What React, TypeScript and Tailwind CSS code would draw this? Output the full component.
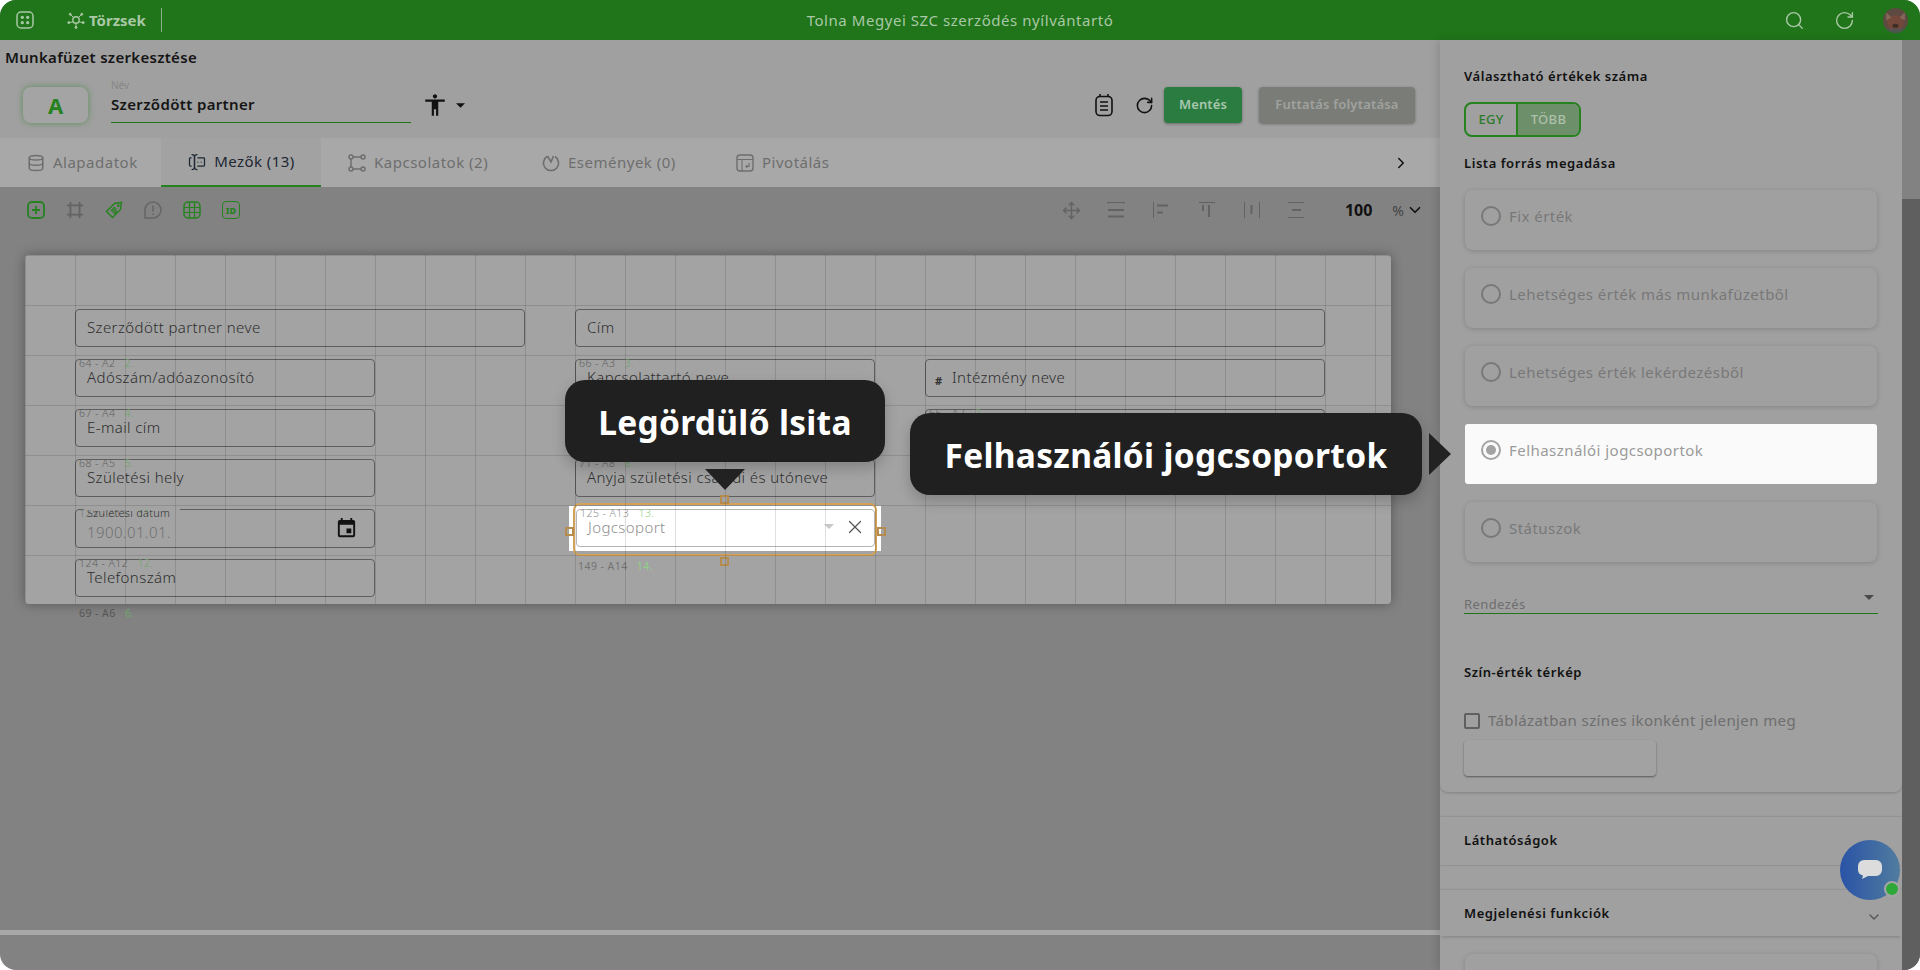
import { ChevronDown, ChevronRight, Database, Move, RotateCw, Search, X } from "lucide-react";
import { MdAccessibility, MdEvent } from "react-icons/md";
import { TbForms, TbFrame } from "react-icons/tb";

const font = "font-['Noto_Sans','Open_Sans',sans-serif]";

const Caret = ({ className }: { className: string }) => (
  <svg viewBox="0 0 10 5" className={className} fill="currentColor">
    <path d="M0 0h10L5 5z" />
  </svg>
);

const Order = ({ children, className = "text-[#6ea569]" }: { children: React.ReactNode; className?: string }) => (
  <span className={`ml-[6px] ${className}`}>{children}</span>
);

const Field = ({
  className,
  label,
  order,
  text,
}: {
  className: string;
  label?: string;
  order?: string;
  text: string;
}) => (
  <div className={`absolute flex h-[38px] items-center rounded-[4px] border border-[#5e5e5e] pb-[2px] pl-[11px] text-[15px] font-light tracking-[0.4px] text-[#2e2e2e] ${className}`}>
    {label && (
      <span className="absolute left-[3px] top-[-4px] whitespace-nowrap text-[10.5px] leading-[14px] tracking-[0.45px] text-[#5f5f5f]">
        {label} <Order>{order}</Order>
      </span>
    )}
    {text}
  </div>
);

const Tab = ({
  icon,
  label,
  className,
}: {
  icon: React.ReactNode;
  label: string;
  className: string;
}) => (
  <div className={`flex items-center gap-[8px] text-[15px] tracking-[0.5px] text-[#6e6e6e] ${className}`}>
    {icon}
    {label}
  </div>
);

const RadioCard = ({ label, active }: { label: string; active?: boolean }) => (
  <div
    className={`ml-px flex h-[60px] w-[412px] gap-[8px] pl-[16px] pt-[16px] text-[15px] tracking-[0.45px] ${
      active ? "rounded-[3px] bg-[#fafafa] text-[#9a9a9a]" : "rounded-[8px] bg-[#a0a0a0] text-[#787878] shadow-[0_1px_5px_rgba(0,0,0,0.18)]"
    }`}
  >
    <span
      className={`flex size-[20px] shrink-0 items-center justify-center rounded-full border-[2px] ${
        active ? "border-[#a3a3a3]" : "border-[#787878]"
      }`}
    >
      {active && <span className="size-[10px] rounded-full bg-[#a3a3a3]" />}
    </span>
    <span className="leading-[20px]">{label}</span>
  </div>
);

const SectionTitle = ({ children, className = "" }: { children: React.ReactNode; className?: string }) => (
  <div className={`text-[13px] font-semibold leading-[16px] tracking-[0.55px] text-[#111] ${className}`}>{children}</div>
);

export default function App() {
  return (
    <div className={`relative flex h-[970px] w-[1920px] flex-col overflow-hidden rounded-2xl bg-[#828282] ${font}`}>
      <header className="flex h-10 shrink-0 items-center bg-[#20741a] text-[#a9c8a5]">
        <div className="flex flex-1 items-center">
          <svg viewBox="0 0 18 18" className="ml-[16px] size-[18px]" fill="none" stroke="currentColor" strokeWidth="1.5">
            <rect x="1" y="1" width="16" height="16" rx="4" />
            <g fill="currentColor" stroke="none">
              <circle cx="6.3" cy="6.3" r="1.6" />
              <circle cx="11.7" cy="6.3" r="1.6" />
              <circle cx="6.3" cy="11.7" r="1.6" />
              <circle cx="11.7" cy="11.7" r="1.6" />
            </g>
          </svg>
          <svg viewBox="0 0 18 18" className="ml-[33px] size-[18px]" fill="currentColor" stroke="currentColor" strokeWidth="1">
            <circle cx="9" cy="9" r="3.2" fill="none" strokeWidth="1.4" />
            <path d="M6.8 6.8 3.5 3.5M11.2 6.8l3.3-3.3M9 12.3V16M6.3 10.8 2 11.6M11.7 10.8l4.3.8" strokeWidth="1" />
            <circle cx="3.2" cy="3.2" r="1" />
            <circle cx="14.8" cy="3.2" r="1" />
            <circle cx="9" cy="16.4" r="1" />
            <circle cx="1.8" cy="11.6" r="1" />
            <circle cx="16.2" cy="11.6" r="1" />
          </svg>
          <span className="ml-[4px] text-[15px] font-bold">Törzsek</span>
          <span className="ml-[15px] h-[24px] w-px bg-[#8cb088]" />
        </div>
        <div className="text-[15px] tracking-[0.55px]">Tolna Megyei SZC szerződés nyílvántartó</div>
        <div className="flex flex-1 items-center justify-end">
          <Search size={21} strokeWidth={1.6} />
          <RotateCw size={21} strokeWidth={1.6} className="ml-[29px]" />
          <svg viewBox="0 0 24 24" className="ml-[28px] mr-[12px] size-[25px] rounded-full">
            <rect width="24" height="24" fill="#5d4a40" />
            <ellipse cx="12" cy="14" rx="8" ry="7" fill="#74483a" />
            <path d="M3 4l5 5-5 3zM21 4l-5 5 5 3z" fill="#85675a" />
            <ellipse cx="12" cy="17" rx="3" ry="2" fill="#3f2d28" />
            <path d="M0 20h24v4H0z" fill="#4f5650" />
          </svg>
        </div>
      </header>

      <div className="flex min-h-0 flex-1">
        <main className="flex w-[1440px] flex-col">
          <div className="h-[98px] bg-[#a0a0a0]">
            <div className="pl-[5px] pt-[8px] text-[15px] font-semibold leading-[19px] tracking-[0.3px] text-[#151515]">
              Munkafüzet szerkesztése
            </div>
            <div className="mt-[20px] flex h-[36px] items-center">
              <div className="ml-[23px] flex h-[36px] w-[65px] items-center justify-center rounded-[8px] bg-[#a4a4a4] text-[22px] font-bold text-[#25821f] shadow-[0_0_6px_rgba(45,130,40,0.6)]">
                A
              </div>
              <div className="relative ml-[23px] h-[36px] w-[300px] border-b border-[#20741a]">
                <span className="absolute -top-[9px] left-0 text-[10px] leading-[14px] text-[#858585]">Név</span>
                <span className="absolute left-0 top-[7px] text-[15px] font-semibold leading-[20px] tracking-[0.35px] text-[#151515]">
                  Szerződött partner
                </span>
              </div>
              <MdAccessibility size={26} className="ml-[11px] text-[#111]" />
              <Caret className="ml-[8px] h-[5px] w-[9px] text-[#111]" />
              <div className="ml-auto flex items-center">
                <svg viewBox="0 0 18 24" className="mr-[22px] h-[24px] w-[18px]" fill="none" stroke="#111" strokeWidth="1.6">
                  <rect x="1" y="3.5" width="16" height="19" rx="4" />
                  <path d="M5 1v3M13 1v3M5 9h8M5 13h8M5 17h8" />
                </svg>
                <RotateCw size={19} strokeWidth={2} className="mr-[10px] text-[#111]" />
                <button className="h-[36px] w-[78px] rounded-[4px] bg-[#2a7c41] text-[13px] font-semibold tracking-[0.1px] text-[#a8c7ae] shadow-[0_1px_3px_rgba(0,0,0,0.35)]">
                  Mentés
                </button>
                <button className="ml-[17px] mr-[25px] h-[36px] w-[156px] rounded-[4px] bg-[#7a7c78] text-[13px] font-semibold tracking-[0.2px] text-[#a1a29f] shadow-[0_1px_3px_rgba(0,0,0,0.35)]">
                  Futtatás folytatása
                </button>
              </div>
            </div>
          </div>

          <nav className="relative flex h-[49px] items-center bg-[#a8a8a8]">
            <Tab className="ml-[27px] w-[134px]" label="Alapadatok" icon={<Database size={18} strokeWidth={2} />} />
            <div className="flex h-full w-[160px] items-center justify-center gap-[7px] border-b-[2px] border-[#25821f] bg-[#a2a2a2] text-[15px] tracking-[0.42px] text-[#1d2733]">
              <TbForms size={20} strokeWidth={1.5} />
              Mezők (13)
            </div>
            <Tab
              className="ml-[27px] w-[194px]"
              label="Kapcsolatok (2)"
              icon={
                <svg viewBox="0 0 18 18" className="size-[18px]" fill="none" stroke="currentColor" strokeWidth="1.5">
                  <circle cx="3" cy="3" r="2" />
                  <circle cx="15" cy="3" r="2" />
                  <circle cx="3" cy="15" r="2" />
                  <circle cx="15" cy="15" r="2" />
                  <path d="M5 3h8M3 5v8M5 15h8" />
                </svg>
              }
            />
            <Tab
              className="w-[194px]"
              label="Események (0)"
              icon={
                <svg viewBox="0 0 18 18" className="size-[18px]" fill="none" stroke="currentColor" strokeWidth="1.6">
                  <path d="M5 2.500A7.600 7.600 0 1 0 13 2.500" />
                  <path d="M5.500 2 9 8l2.500-6" />
                </svg>
              }
            />
            <Tab
              className=""
              label="Pivotálás"
              icon={
                <svg viewBox="0 0 18 18" className="size-[18px]" fill="none" stroke="currentColor" strokeWidth="1.4">
                  <rect x="1" y="1" width="16" height="16" rx="3" />
                  <path d="M1 5.500h16M6 5.500V17M13 9v3.500h-3M11.200 11 10 12.500l1.200 1.300" strokeWidth="1.1" />
                </svg>
              }
            />
            <ChevronRight size={18} strokeWidth={2} className="absolute left-[1392px] text-[#111]" />
          </nav>

          <div className="flex h-[68px] items-center pb-[22px] text-[#25821f]">
            <div className="ml-[27px] flex items-center gap-[21px]">
              <svg viewBox="0 0 18 18" className="size-[18px]" fill="none" stroke="currentColor" strokeWidth="1.8">
                <rect x="1" y="1" width="16" height="16" rx="4" />
                <path d="M9 5v8M5 9h8" />
              </svg>
              <TbFrame size={22} strokeWidth={2} className="-mx-[2px] text-[#636363]" />
              <svg viewBox="0 0 18 18" className="size-[18px]" fill="none" stroke="currentColor" strokeWidth="1.5">
                <path d="M1.500 10.500 9.500 2.500 16.500 1.500 15.500 8.500 7.500 16.500z" />
                <path d="M6 10l4-4M7.500 11.500l4-4M9 13l3-3" />
                <circle cx="13.300" cy="4.700" r=".6" />
              </svg>
              <svg viewBox="0 0 18 18" className="size-[18px] text-[#666]" fill="none" stroke="currentColor" strokeWidth="1.6">
                <path d="M1 17V9a8 8 0 1 1 8 8z" />
                <path d="M9 4.500v6M9 12.500v1.600" />
              </svg>
              <svg viewBox="0 0 18 18" className="size-[18px]" fill="none" stroke="currentColor" strokeWidth="1.5">
                <rect x="1" y="1" width="16" height="16" rx="4" />
                <path d="M1 6.500h16M1 11.500h16M6.500 1v16M11.500 1v16" strokeWidth="1.2" />
              </svg>
              <div className="flex size-[18px] items-center justify-center rounded-[4px] border-[1.7px] border-[#25821f] text-[9px] font-extrabold leading-none">
                ID
              </div>
            </div>
            <div className="ml-auto flex items-center text-[#636363]">
              <Move size={19} strokeWidth={1.8} />
              <svg viewBox="0 0 18 18" className="ml-[26px] size-[18px]" fill="none" stroke="currentColor">
                <path d="M1 1.500h16M1 1v2M17 1v2" strokeWidth="1" />
                <path d="M1 9h16M1 15.500h16" strokeWidth="2" />
              </svg>
              <svg viewBox="0 0 18 18" className="ml-[27px] size-[18px]" fill="none" stroke="currentColor">
                <path d="M1.500 1v16" strokeWidth="1" />
                <path d="M5 4.500h11M5 11.500h6" strokeWidth="2" />
              </svg>
              <svg viewBox="0 0 18 18" className="ml-[28px] size-[18px]" fill="none" stroke="currentColor">
                <path d="M1 1.500h16" strokeWidth="1.200" />
                <path d="M5 4v6M11 4v12" strokeWidth="2" />
              </svg>
              <svg viewBox="0 0 18 18" className="ml-[27px] size-[18px]" fill="none" stroke="currentColor">
                <path d="M1.500 1v16M16.500 1v16" strokeWidth="1" />
                <path d="M8.500 4v9" strokeWidth="2" />
              </svg>
              <svg viewBox="0 0 18 18" className="ml-[26px] size-[18px]" fill="none" stroke="currentColor">
                <path d="M1 1.500h16M1 16.500h16" strokeWidth="1" />
                <path d="M5 9h9" strokeWidth="2" />
              </svg>
              <span className="ml-[40px] text-[16px] font-bold text-[#111]">100</span>
              <span className="ml-[20px] text-[14px] text-[#444]">%</span>
              <ChevronDown size={18} strokeWidth={2.2} className="ml-[2px] mr-[16px] text-[#111]" />
            </div>
          </div>

          <div className="relative ml-[25px] h-[349px] w-[1366px] rounded-[4px] bg-[#a3a3a3] shadow-[0_0_12px_rgba(0,0,0,0.35)]">
            <Field className="left-[50px] top-[54px] w-[450px]" text="Szerződött partner neve" />
            <Field className="left-[50px] top-[104px] w-[300px]" label="64 - A2" order="2." text="Adószám/adóazonosító" />
            <Field className="left-[50px] top-[154px] w-[300px]" label="67 - A4" order="4." text="E-mail cím" />
            <Field className="left-[50px] top-[204px] w-[300px]" label="68 - A5" order="5." text="Születési hely" />
            <div className="absolute left-[50px] top-[254px] flex h-[39px] w-[300px] items-center rounded-[4px] border border-[#5e5e5e] pl-[11px] pt-[8px] text-[15px] font-light tracking-[0.4px] text-[#6f6f6f]">
              <span className="absolute left-[3px] top-[-4px] whitespace-nowrap text-[10.5px] leading-[14px] tracking-[0.45px] text-[#777]">
                125 - A11 <Order>11.</Order>
              </span>
              <span className="absolute -top-[4px] left-[11px] whitespace-nowrap pr-[4px] text-[11px] leading-[14px] tracking-[0.25px] text-[#333]">
                Születési dátum
              </span>
              <span className="absolute -top-px left-[8px] h-px w-[96px] bg-[#a3a3a3]" />
              1900.01.01.
              <MdEvent size={23} className="absolute right-[16px] top-[7px] text-[#111]" />
            </div>
            <Field className="left-[50px] top-[304px] w-[300px]" label="124 - A12" order="12." text="Telefonszám" />
            <span className="absolute left-[54px] top-[351px] text-[10.5px] leading-[14px] tracking-[0.45px] text-[#555]">
              69 - A6 <Order>6.</Order>
            </span>

            <Field className="left-[550px] top-[54px] w-[750px]" text="Cím" />
            <Field className="left-[550px] top-[104px] w-[300px]" label="66 - A3" order="3." text="Kapcsolattartó neve" />
            <Field className="left-[900px] top-[104px] w-[400px]" text="" />
            <span className="absolute left-[910px] top-[118px] text-[11px] font-bold leading-[16px] text-[#333]">#</span>
            <span className="absolute left-[927px] top-[112px] text-[15px] font-light leading-[20px] tracking-[0.4px] text-[#2e2e2e]">Intézmény neve</span>
            <Field className="left-[900px] top-[154px] w-[400px]" label="65 - A7" order="7." text="" />
            <Field className="left-[550px] top-[154px] w-[300px]" text="" />
            <Field className="left-[550px] top-[204px] w-[300px]" label="71 - A8" order="8." text="Anyja születési családi és utóneve" />

            <div className="absolute left-[544px] top-[251px] h-[45px] w-[312px] bg-white" />
            <div className="absolute left-[548px] top-[248px] h-[53px] w-[304px] rounded-[7px] border-[2px] border-[#d4a257]" />
            <div className="absolute left-[695px] top-[240px] size-[9px] border-[2px] border-[#b58c4e]" />
            <div className="absolute left-[695px] top-[302px] size-[9px] border-[2px] border-[#b58c4e]" />
            <div className="absolute left-[540px] top-[272px] size-[9px] border-[2px] border-[#b58c4e]" />
            <div className="absolute left-[852px] top-[272px] size-[9px] border-[2px] border-[#b58c4e]" />
            <div className="absolute left-[551px] top-[254px] flex h-[38px] w-[299px] items-center rounded-[4px] border border-[#b5b5b5] pb-[2px] pl-[11px] text-[15px] font-light tracking-[0.4px] text-[#8f8f8f]">
              <span className="absolute left-[3px] top-[-4px] whitespace-nowrap text-[10.5px] leading-[14px] tracking-[0.45px] text-[#8f8f8f]">
                125 - A13 <Order className="text-[#8fd088]">13.</Order>
              </span>
              Jogcsoport
              <Caret className="absolute right-[40px] top-[14px] h-[5px] w-[10px] text-[#c8c8c8]" />
              <X size={22} strokeWidth={1.3} className="absolute right-[8px] top-[6px] text-[#555]" />
            </div>
            <span className="absolute left-[553px] top-[304px] text-[10.5px] leading-[14px] tracking-[0.45px] text-[#747474]">
              149 - A14 <Order className="text-[#8fd088]">14.</Order>
            </span>

            <div className="pointer-events-none absolute inset-0 rounded-[4px] bg-[linear-gradient(to_right,rgba(0,0,0,0.12)_1px,transparent_1px),linear-gradient(to_bottom,rgba(0,0,0,0.12)_1px,transparent_1px)] bg-[size:50px_50px]" />
          </div>

          <div className="mt-auto h-[5px] bg-[#a8a8a8]" />
          <div className="h-[35px]" />
        </main>

        <aside className="relative flex w-[480px]">
          <div className="h-full w-[462px] overflow-hidden bg-[#a0a0a0] shadow-[-3px_0_8px_rgba(0,0,0,0.12)]">
            <section className="h-[752px] rounded-b-[8px] px-[24px] pt-[28px] shadow-[0_1px_3px_rgba(0,0,0,0.2)]">
              <SectionTitle>Választható értékek száma</SectionTitle>
              <div className="mt-[18px] flex h-[35px] w-[117px] overflow-hidden rounded-[8px] border-[2px] border-[#25821f] text-[13px] tracking-[0.3px]">
                <div className="flex w-[52px] items-center justify-center border-r-[2px] border-[#25821f] font-medium text-[#2c7a2a]">EGY</div>
                <div className="flex flex-1 items-center justify-center bg-[#6d8f6a] font-medium text-[#adc0ac]">TÖBB</div>
              </div>
              <SectionTitle className="mt-[18px]">Lista forrás megadása</SectionTitle>
              <div className="mt-[19px] flex flex-col gap-[18px]">
                <RadioCard label="Fix érték" />
                <RadioCard label="Lehetséges érték más munkafüzetből" />
                <RadioCard label="Lehetséges érték lekérdezésből" />
                <RadioCard label="Felhasználói jogcsoportok" active />
                <RadioCard label="Státuszok" />
              </div>
              <div className="relative mt-[34px] h-[18px] w-[414px] border-b border-[#20741a] text-[13px] leading-[17px] tracking-[0.4px] text-[#6e6e6e]">
                Rendezés
                <Caret className="absolute right-[4px] top-[-1px] h-[5px] w-[10px] text-[#4a4a4a]" />
              </div>
              <SectionTitle className="mt-[50px]">Szín-érték térkép</SectionTitle>
              <div className="mt-[33px] flex h-[16px] items-center gap-[8px] pb-[2px] text-[15px] tracking-[0.4px] text-[#6e6e6e]">
                <span className="mt-[2px] size-[16px] rounded-[2px] border-[2px] border-[#5f5f5f]" />
                Táblázatban színes ikonként jelenjen meg
              </div>
              <div className="mt-[11px] h-[36px] w-[192px] rounded-[4px] bg-[#a2a2a2] shadow-[0_1px_2px_rgba(0,0,0,0.45)]" />
            </section>
            <section className="mt-[25px] flex h-[48px] items-center px-[24px] pb-[2px] shadow-[0_0_2px_rgba(0,0,0,0.25)]">
              <SectionTitle>Láthatóságok</SectionTitle>
            </section>
            <section className="mt-[25px] shadow-[0_0_2px_rgba(0,0,0,0.25)]">
              <div className="relative flex h-[46px] items-center px-[24px] shadow-[0_3px_3px_-2px_rgba(0,0,0,0.2)]">
                <SectionTitle>Megjelenési funkciók</SectionTitle>
                <ChevronDown size={16} strokeWidth={2} className="absolute right-[20px] top-[19px] text-[#555]" />
              </div>
              <div className="ml-[25px] mt-[18px] h-[60px] w-[412px] rounded-[8px] bg-[#a0a0a0] shadow-[0_1px_5px_rgba(0,0,0,0.18)]" />
            </section>
          </div>
          <div className="flex w-[18px] flex-col">
            <div className="h-[159px] bg-[#828282]" />
            <div className="flex-1 bg-[#5f5f5f]" />
          </div>
          <div className="absolute left-[400px] top-[800px] flex size-[60px] items-center justify-center rounded-full bg-[linear-gradient(to_right,#2a53a6,#507c9f)]">
            <svg viewBox="0 0 26 22" className="h-[22px] w-[26px]" fill="#dcdcdc">
              <path d="M7 1h12a6 6 0 0 1 6 6v4a6 6 0 0 1-6 6h-8l-6 3 1-3.500A6 6 0 0 1 1 11V7a6 6 0 0 1 6-6z" />
            </svg>
            <span className="absolute left-[44px] top-[41px] size-[16px] rounded-full border-[2px] border-[#a5a5a5] bg-[#2fa83a]" />
          </div>
        </aside>
      </div>

      <div className="absolute left-[565px] top-[380px] flex h-[82px] w-[320px] items-center justify-center rounded-[20px] bg-[#202020] pt-[2px] text-[33.5px] font-bold tracking-[0.3px] text-white shadow-[0_6px_14px_rgba(0,0,0,0.2)]">
        Legördülő lsita
      </div>
      <svg viewBox="0 0 40 21" className="absolute left-[705px] top-[469px] h-[21px] w-[40px]" fill="#222">
        <path d="M0 0h40L20 21z" />
      </svg>
      <div className="absolute left-[910px] top-[413px] flex h-[82px] w-[512px] items-center justify-center rounded-[20px] bg-[#202020] pt-[2px] text-[33.5px] font-bold tracking-[0.3px] text-white shadow-[0_6px_14px_rgba(0,0,0,0.2)]">
        Felhasználói jogcsoportok
      </div>
      <svg viewBox="0 0 22 42" className="absolute left-[1429px] top-[433px] h-[42px] w-[22px]" fill="#222">
        <path d="M0 0l22 21L0 42z" />
      </svg>
    </div>
  );
}
